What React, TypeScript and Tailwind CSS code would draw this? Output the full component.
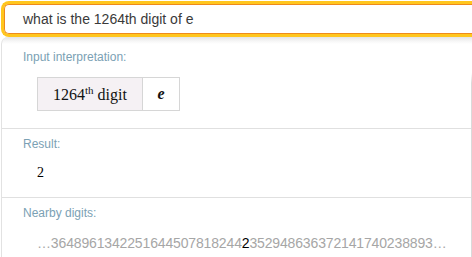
export default function App() {
  const before = "3648961342251644507818244";
  const after = "352948636372141740238893";

  return (
    <div className="w-[472px] h-[257px] overflow-hidden bg-white font-['Liberation_Sans',Arial,sans-serif]">
      {/* query box */}
      <div className="ml-[1px] mt-[1px] w-[540px] rounded-l-[8px] border-[3px] border-r-0 border-[#ffc61e]">
        <div className="h-[30px] rounded-l-[5px] border border-r-0 border-[#ef8a1c] bg-white pl-[18px] flex items-center text-[14px] text-[#3a3a3a]">
          what is the 1264th digit of e
        </div>
      </div>

      {/* results panel */}
      <div className="ml-[1px] w-[471px] flex rounded-tl-[7px] border-l border-[#e2e2e2] bg-[linear-gradient(#e4e4e4,#f6f6f6_4px,#ffffff_7px)]">
        <div className="flex-1 flex flex-col">
          <section className="h-[92px] pt-[13px] pl-[21px] border-b border-[#e0e0e0]">
            <div className="text-[12px] leading-[14px] text-[#7ba1b4]">Input interpretation:</div>
            <div className="mt-[13px] ml-[14px] flex h-[34px] w-fit border border-[#d6d6d6] font-['Liberation_Serif','Times_New_Roman',serif] text-[16px] text-[#111]">
              <div className="w-[105px] flex items-center justify-center bg-[#f5f1f4] border-r border-[#d6d6d6]">
                <span className="leading-[16px] pt-[2px]">
                  1264<span className="text-[11px] relative -top-[6px]">th</span> digit
                </span>
              </div>
              <div className="w-[36px] flex items-center justify-center bg-white font-bold italic">e</div>
            </div>
          </section>

          <section className="h-[69px] pt-[8px] pl-[21px] border-b border-[#e0e0e0]">
            <div className="text-[12px] leading-[14px] text-[#7ba1b4]">Result:</div>
            <div className="mt-[14px] ml-[14px] font-['Liberation_Serif','Times_New_Roman',serif] text-[14px] leading-[16px] text-black">
              2
            </div>
          </section>

          <section className="pt-[8px] pl-[21px] h-[60px]">
            <div className="text-[12px] leading-[14px] text-[#7ba1b4]">Nearby digits:</div>
            <div className="mt-[15px] ml-[14px] text-[14px] leading-[16px] text-[#a6a6a6] whitespace-nowrap tracking-[-0.15px]">
              …{before}
              <span className="text-black">2</span>
              {after}…
            </div>
          </section>
        </div>
        <div className="w-px bg-[linear-gradient(to_bottom,transparent_36px,#dadada_46px)]"></div>
      </div>
    </div>
  );
}
